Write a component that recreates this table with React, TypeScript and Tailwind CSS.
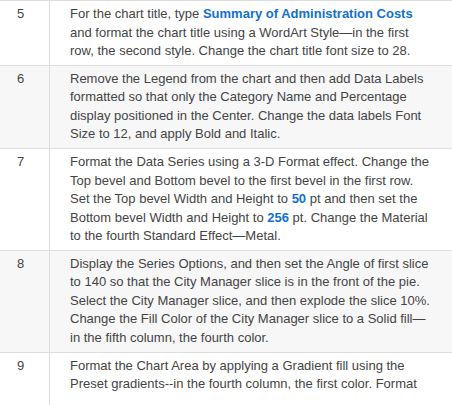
const B = ({ children }: { children: React.ReactNode }) => (
  <strong className="font-bold text-[#1170cf]">{children}</strong>
)

const rows: { n: number; lines: React.ReactNode[] }[] = [
  {
    n: 5,
    lines: [
      <>For the chart title, type <B>Summary of Administration Costs</B></>,
      'and format the chart title using a WordArt Style\u2014in the first',
      'row, the second style. Change the chart title font size to 28.',
    ],
  },
  {
    n: 6,
    lines: [
      'Remove the Legend from the chart and then add Data Labels',
      'formatted so that only the Category Name and Percentage',
      'display positioned in the Center. Change the data labels Font',
      'Size to 12, and apply Bold and Italic.',
    ],
  },
  {
    n: 7,
    lines: [
      'Format the Data Series using a 3-D Format effect. Change the',
      'Top bevel and Bottom bevel to the first bevel in the first row.',
      <>Set the Top bevel Width and Height to <B>50</B> pt and then set the</>,
      <>Bottom bevel Width and Height to <B>256</B> pt. Change the Material</>,
      'to the fourth Standard Effect\u2014Metal.',
    ],
  },
  {
    n: 8,
    lines: [
      'Display the Series Options, and then set the Angle of first slice',
      'to 140 so that the City Manager slice is in the front of the pie.',
      'Select the City Manager slice, and then explode the slice 10%.',
      'Change the Fill Color of the City Manager slice to a Solid fill\u2014',
      'in the fifth column, the fourth color.',
    ],
  },
  {
    n: 9,
    lines: [
      'Format the Chart Area by applying a Gradient fill using the',
      'Preset gradients--in the fourth column, the first color. Format',
    ],
  },
]

export default function App() {
  return (
    <div className="flex flex-col w-[452px] h-[405px] overflow-hidden bg-white font-['Liberation_Sans',Arial,sans-serif] text-[13px] leading-[1.42857] text-[#444]">
      {rows.map((row, i) => (
        <div
          key={row.n}
          className={`flex border-t border-[#ddd] ${i % 2 === 1 ? 'bg-[#f7f7f7]' : 'bg-white'} ${
            i === rows.length - 1 ? 'flex-1' : ''
          }`}
        >
          <div className="w-[50px] shrink-0 border-r border-[#ddd] pl-[17px] py-1">{row.n}</div>
          <div className="flex-1 pl-[20px] py-1 whitespace-nowrap">
            {row.lines.map((line, j) => (
              <div key={j}>{line}</div>
            ))}
          </div>
        </div>
      ))}
    </div>
  )
}
